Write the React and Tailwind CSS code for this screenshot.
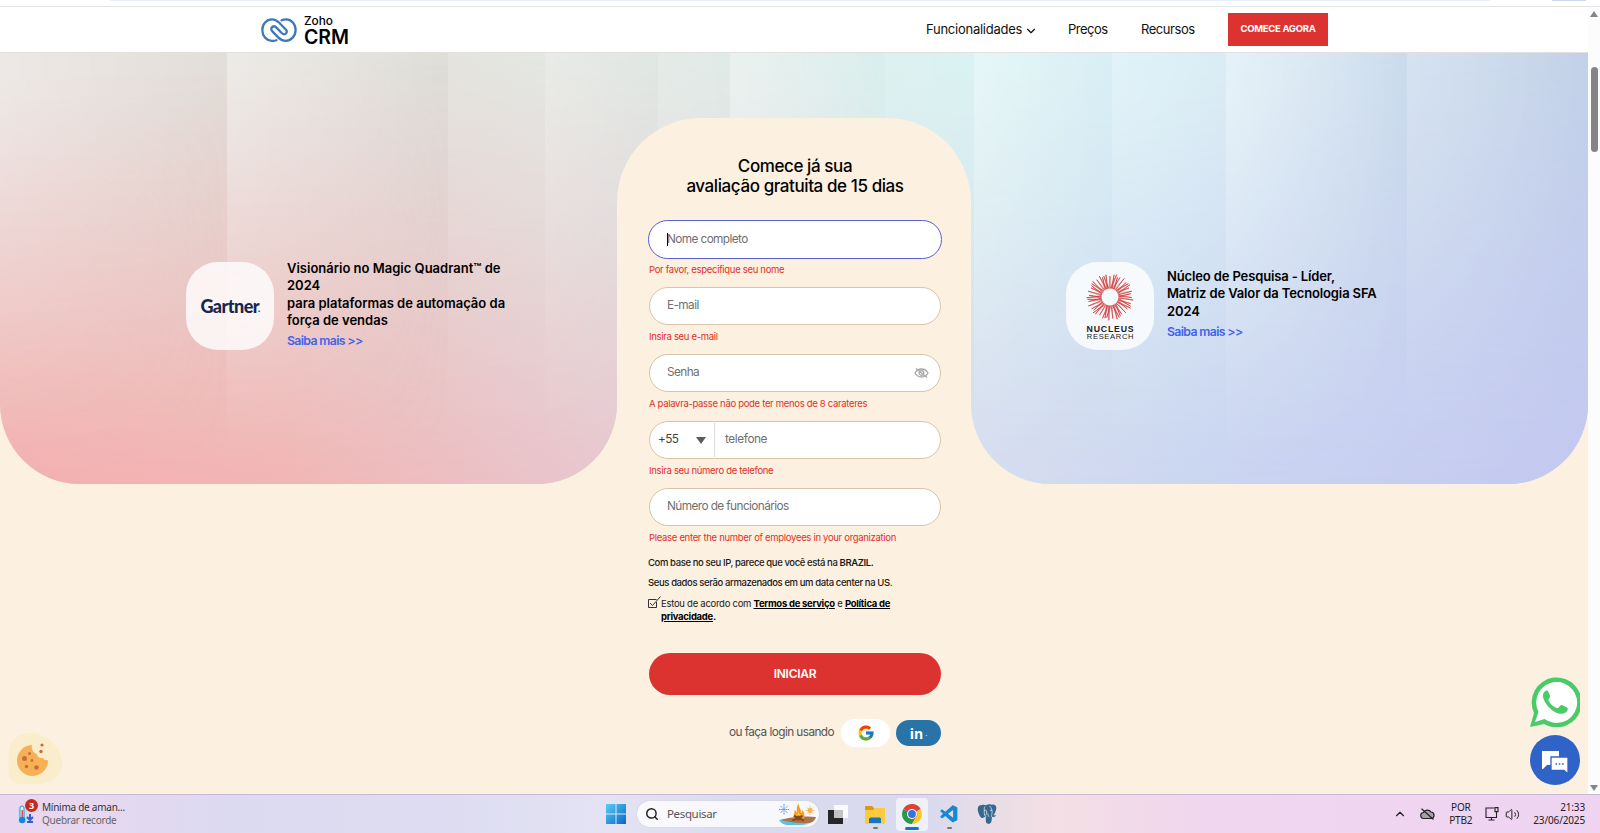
import React from "react";
import { FcGoogle } from "react-icons/fc";
import { VscVscode } from "react-icons/vsc";
import { ChevronDown, ChevronUp, Search, Volume2 } from "lucide-react";

const bandClasses = [
  "w-[227px] from-white/30 to-black/[0.005]",
  "w-[221px] from-white/35 to-black/[0.005]",
  "w-[97px] from-white/15 to-white/15",
  "w-[113px] from-white/30 to-white/5",
  "w-[72px] from-white/20 to-white/10",
  "w-[155px] from-white/40 to-white/5",
  "w-[89px] from-white/15 to-white/10",
  "w-[138px] from-white/40 to-white/10",
  "w-[114px] from-white/30 to-white/20",
  "w-[181px] from-white/45 to-white/0",
  "w-[181px] from-white/20 to-white/0",
];

function Bands() {
  return (
    <div className="grid h-[431px] w-[1588px] shrink-0 bg-[linear-gradient(to_right,#e6dfdb_0%,#e0e0da_28%,#dfe8e3_42%,#d6f3f1_60%,#d4eff6_72%,#d0e2ef_84%,#c3d3e8_100%)]">
      <div className="[grid-area:1/1] bg-[linear-gradient(to_right,#f5a8a8_0%,#f3b0b0_18%,#e8c4cd_38%,#d8dcee_60%,#cbd5f0_75%,#c3c8f0_100%)] [mask-image:linear-gradient(177deg,transparent_5%,rgba(0,0,0,.38)_40%,rgba(0,0,0,.7)_68%,black_97%)]" />
      <div className="flex [grid-area:1/1] [mask-image:linear-gradient(to_bottom,black_10%,rgba(0,0,0,.5)_50%,transparent_95%)]">
        {bandClasses.map((c) => (
          <div key={c} className={"shrink-0 bg-linear-to-r " + c} />
        ))}
      </div>
    </div>
  );
}

function ZohoMark() {
  return (
    <svg viewBox="0 0 36 24" className="h-6 w-9" fill="none" stroke="#3d78bd" strokeWidth="2.3" strokeLinecap="round" strokeLinejoin="round">
      <path d="M15.500 22.200c-2 .8-3.600.6-4.700.6C5.300 22.700 1.300 18 1.300 12S5.500 1.300 11 1.300c3 0 5 1.200 7 3.200l7 7.300c1.800 2 .2 4.500-1.800 4.500-1 0-1.700-.5-2.300-1.100l-5.400-5.600c-1.500-1.500-3-1.600-4.200-.6-1.500 1.200-1.300 3 .1 4.400l5.800 6c2.200 2.200 4.600 3.400 7.400 3.400 5.500 0 10-4.800 10-10.800S30.500 1.300 25 1.300c-1.600 0-3 .3-4.400 1" />
    </svg>
  );
}

function Field({ children, focused }) {
  return (
    <div
      className={
        "flex items-center rounded-full border bg-white text-[11.800px] text-[#6f6f6f] " +
        (focused ? "-mx-px h-[39px] border-[#5a5fd0] pl-[18px] tracking-[-0.6px]" : "h-[38px] border-[#d9c5a6] pl-[17px] tracking-[-0.58px]")
      }
    >
      {children}
    </div>
  );
}

function Err({ children, first }) {
  return (
    <p className={"text-[9.500px] leading-[15px] tracking-[-0.31px] whitespace-nowrap text-[#e0302a] " + (first ? "h-[28px] pt-[3px]" : "h-[29px] pt-[4px]")}>
      {children}
    </p>
  );
}

const rays = Array.from({ length: 48 }, (_, i) => {
  const a = (i / 48) * Math.PI * 2;
  const b = a + (((i * 7) % 5) - 2) * 0.08;
  const r = 21 + ((i * 3) % 4) * 0.8;
  return [24 + Math.cos(a) * 8.5, 24 + Math.sin(a) * 8.5, 24 + Math.cos(b) * r, 24 + Math.sin(b) * r];
});

function Nucleus() {
  return (
    <div className="flex size-[88px] shrink-0 flex-col items-center rounded-[32px] bg-white/80 pt-[11px] font-['Liberation_Sans'] text-[#222]">
      <svg viewBox="0 0 48 48" className="size-[48px] shrink-0" stroke="#cf3a38" strokeWidth="0.8">
        {rays.map((r, i) => (
          <line key={i} x1={r[0]} y1={r[1]} x2={r[2]} y2={r[3]} />
        ))}
        {rays.map((r, i) => (
          <line key={"b" + i} x1={r[0]} y1={r[1]} x2={rays[(i + 1) % 48][2]} y2={rays[(i + 1) % 48][3]} strokeWidth="0.5" />
        ))}
      </svg>
      <span className="mt-[4px] ml-px text-[8.700px] leading-[8px] font-bold tracking-[0.85px]">NUCLEUS</span>
      <span className="ml-px text-[7.600px] leading-[8px] tracking-[0.65px]">RESEARCH</span>
    </div>
  );
}

function Header() {
  return (
    <header className="flex h-[46px] w-[1588px] items-center border-b border-[#e4e0dd] bg-white pl-[261px] text-[13px] text-[#111]">
      <ZohoMark />
      <div className="ml-[7px] flex w-[70px] flex-col pt-[2px] text-black">
        <span className="text-[11.800px] leading-[12px] font-medium">Zoho</span>
        <span className="text-[19.500px] leading-[20px] font-semibold tracking-[-0.1px]">CRM</span>
      </div>
      <nav className="ml-[552px] flex items-center whitespace-nowrap">
        <span className="w-[97px] tracking-[-0.25px]">Funcionalidades</span>
        <ChevronDown className="mt-[3px] ml-px size-[14px]" strokeWidth={2} />
        <span className="ml-[30px] w-[73px] tracking-[-0.5px]">Preços</span>
        <span className="w-[87px] tracking-[-0.45px]">Recursos</span>
      </nav>
      <button className="h-[33px] w-[100px] bg-[#dc3330] text-[9.500px] font-bold tracking-[-0.3px] text-white">COMECE AGORA</button>
    </header>
  );
}

function HiddenEye() {
  return (
    <svg viewBox="0 0 15 12" className="mr-[11px] h-[12px] w-[15px]" fill="none" stroke="#a8a8a8" strokeWidth="1.300">
      <path d="M1 6c1.500-2.600 3.700-4 6.500-4S12.500 3.400 14 6c-1.500 2.600-3.700 4-6.500 4S2.500 8.600 1 6z" />
      <circle cx="7.500" cy="6" r="2.300" />
      <path d="M2 1.500l11 9" />
    </svg>
  );
}

function Form() {
  return (
    <div className="z-10 mt-[65px] w-[354px] rounded-t-[84px] bg-[#fcf0e0] pr-[30px] pl-[32px] pt-[38px] [grid-area:1/2]">
      <h1 className="text-center text-[17px] leading-[20px] font-medium tracking-[-0.41px] whitespace-nowrap text-black">
        Comece já sua
        <br />
        avaliação gratuita de 15 dias
      </h1>
      <div className="mt-[24px] flex flex-col">
        <Field focused>
          <span className="h-[13px] w-px bg-black" />
          <span className="-ml-px">Nome completo</span>
        </Field>
        <Err first>Por favor, especifique seu nome</Err>
        <Field>E-mail</Field>
        <Err>Insira seu e-mail</Err>
        <Field>
          <span className="flex-1">Senha</span>
          <HiddenEye />
        </Field>
        <Err>A palavra-passe não pode ter menos de 8 carateres</Err>
        <div className="flex h-[38px] items-center rounded-full border border-[#d9c5a6] bg-white pl-[8px] text-[11.800px] tracking-[-0.6px] text-[#6f6f6f]">
          <span className="w-[38px] text-[#444]">+55</span>
          <svg viewBox="0 0 10 7" className="h-[7px] w-[10px]" fill="#5c5c5c"><path d="M0 0h10L5 7z" /></svg>
          <span className="ml-[8px] h-[34px] w-px bg-[#ddd]" />
          <span className="ml-[10px] tracking-[-0.4px]">telefone</span>
        </div>
        <Err>Insira seu número de telefone</Err>
        <Field>Número de funcionários</Field>
        <Err>Please enter the number of employees in your organization</Err>
      </div>
      <div className="-ml-px pt-px text-[9.500px] tracking-[-0.39px] whitespace-nowrap text-[#1a1a1a]">
        <p className="leading-[14px] font-medium">Com base no seu IP, parece que você está na <b className="font-semibold">BRAZIL.</b></p>
        <p className="mt-[6px] leading-[14px] font-medium">Seus dados serão armazenados em um data center na US.</p>
        <div className="mt-[7px] flex leading-[13px] tracking-[-0.27px]">
          <svg viewBox="0 0 13 12" className="mt-[-1px] h-[12px] w-[13px]" fill="none" stroke="#333" strokeWidth="1"><path d="M8.500 3.500H.5v8h8V6M2 7l2.500 2.500L12.500.5" /></svg>
          <p>
            Estou de acordo com <b className="text-black underline">Termos de serviço</b> e <b className="text-black underline">Política de</b>
            <br />
            <b className="text-black"><span className="underline">privacidade</span>.</b>
          </p>
        </div>
      </div>
      <button className="mt-[30px] block h-[42px] w-full rounded-full bg-[#dc3330] text-[12px] font-semibold tracking-[-0.25px] text-white">INICIAR</button>
      <div className="mt-[24px] flex items-center justify-end">
        <span className="text-[11.800px] tracking-[-0.57px] whitespace-nowrap text-[#555]">ou faça login usando</span>
        <span className="ml-[7px] flex h-[28px] w-[49px] items-center justify-center rounded-full bg-white"><FcGoogle className="size-[18px]" /></span>
        <span className="ml-[6px] flex h-[26px] w-[45px] items-center justify-center rounded-full bg-[#2873a8] font-['Open_Sans'] text-[14px] font-bold text-white">in<small className="pl-[2px] text-[8px] font-normal">.</small></span>
      </div>
    </div>
  );
}

function Cookie() {
  return (
    <svg viewBox="0 0 54 52" className="absolute top-[733px] left-[8px] h-[52px] w-[54px]">
      <path d="M1 18C2 6 11 0 22 0c15 0 30 12 32 29 1 13-8 21-22 22H12C3 51 0 43 .5 34z" fill="#f9edcb" />
      <path d="M24 12a15.500 15.500 0 1 0 16 15c-2 .5-4 0-5-2-3 .5-6-1-6-4-3-1-6-4-5-9z" fill="#f6b055" />
      <g fill="#cb6b3d">
        <circle cx="16.500" cy="25.500" r="2.500" /><circle cx="28.500" cy="34.500" r="2.300" /><circle cx="18.500" cy="33.500" r="1.700" />
        <circle cx="21.500" cy="20.500" r="1.500" /><circle cx="24" cy="27.500" r="1.400" /><circle cx="34" cy="12" r="1.600" /><circle cx="33" cy="18.500" r="1.700" />
      </g>
    </svg>
  );
}

function Elephant() {
  return (
    <svg viewBox="0 0 20 20" className="ml-[17px] size-[20px]">
      <path d="M1 7C0 3 2 .8 5 1c1.500-.5 3-.3 4 .3C11-.2 13.500.2 15 .7c3-.5 4.800 1.300 4.200 4.300-.4 2.500-1.500 4.500-2.700 6.300 1 .2 2 .2 2.700 0-.8 1.500-2.400 2-4.200 1.700L14.500 17c-.3 2-1.600 3-3.200 2.800-1.800-.2-2.500-1.600-2.500-3.300L8.700 12.500c-1 .8-1.700 1.500-2.900 1.600C3.500 14.200 1.500 10 1 7z" fill="#35678f" />
      <path d="M8.700 12.500C7 11 7.300 9 7.300 7c0-1.500-.4-3 .6-4.500M14.800 13c-.6-2 .3-3 .3-5 0-2.200-.5-4-2.500-6M8.800 12.500c-.7.900-1.300 1-2.300 1M7.300 6.500c1-.7 2-.3 2.300.3.400 1.500-.2 3.200-.8 4.500M15.100 6.500c-.8-.4-1.500-.3-2 0M10.800 9.500c.3 2 .6 3 1.500 3.500" fill="none" stroke="#dce6f0" strokeWidth=".8" />
    </svg>
  );
}

function Campfire() {
  return (
    <svg viewBox="0 0 38 22" className="h-[22px] w-[38px]">
      <path d="M1 17c8-2.500 24-4.500 36-3-1 3.500-4 6-9 6.500C20 21.500 6 20 1 17z" fill="#a9744a" />
      <path d="M0 16.500c5 1.500 16 3.500 29 4.500-7 1.500-17 1.300-22.500.7C3 21 1 19 0 16.500z" fill="#5cc0e3" />
      <path d="M14.500 16c-.8-4 1.500-5 1-9 1.700 1 2 2.500 2.200 4 .2-4-.4-7 1.800-10.500.2 4 3 5.500 2.500 10 .8-1 1.500-2 1.500-4 1.800 3 2.500 6.500 1.500 9.500z" fill="#f59a1f" />
      <path d="M17 16c0-3 1.500-4 2.500-7 1 3 2.500 4 2.500 7z" fill="#ffcf4a" />
      <path d="M13.500 17.500l10-4.500M25 17.500L15 13M19.500 12.500v5" stroke="#8a4718" strokeWidth="2" />
      <path d="M5 1v11M0 6.500h10M1.500 3l7 7M8.500 3l-7 7" stroke="#5d93e5" strokeWidth="1" strokeDasharray="1.600 .6" />
      <circle cx="31" cy="7.500" r="2.400" fill="#f5b54a" />
      <path d="M31 3v9M26.500 7.500h9M28 4.500l6 6M34 4.500l-6 6" stroke="#f5b54a" strokeWidth=".7" />
    </svg>
  );
}

function Taskbar() {
  return (
    <footer className="flex h-[39px] items-center border-t border-[#c8b9d6] bg-[linear-gradient(to_right,#ecd6ef_0%,#dcdaf0_14%,#dddcf1_28%,#e3e3f4_38%,#dadbee_46%,#d9daee_58%,#eadde6_62%,#f3dfe4_66%,#f0d6ee_75%,#efd4f2_100%)] font-['Noto_Sans'] text-[10px] text-[#333]">
      <div className="flex w-[606px] items-center pl-[17px]">
        <div className="relative h-[22px] w-[22px]">
          <svg viewBox="0 0 22 22" className="size-[22px]">
            <rect x="1" y="3" width="9" height="17" rx="2" fill="#c2dff3" />
            <rect x="3" y="3" width="4" height="13" rx="2" fill="#e9f6ff" stroke="#3988c7" />
            <rect x="4.500" y="7" width="1.500" height="8" fill="#d94a55" />
            <circle cx="5.200" cy="17" r="3.200" fill="#1686d9" />
            <path d="M13 11v6m-3-3 3 3 3-3M10 19h6" stroke="#315fd0" strokeWidth="2" fill="none" />
          </svg>
          <span className="absolute -top-[4px] left-[8px] flex size-[13px] items-center justify-center rounded-full bg-[#c42b1c] text-[9px] font-bold text-white">3</span>
        </div>
        <div className="ml-[3px] leading-[13.500px] tracking-[-0.25px] whitespace-nowrap"><p>Mínima de aman...</p><p className="text-[#666]">Quebrar recorde</p></div>
      </div>
      <svg viewBox="0 0 20 20" className="size-[20px]">
        <defs><linearGradient id="win" x1="0" y1="0" x2="1" y2="1"><stop stopColor="#57cdf7" /><stop offset="1" stopColor="#0867c4" /></linearGradient></defs>
        <path fill="url(#win)" d="M0 0h9.500v9.500H0zM10.500 0H20v9.500h-9.500zM0 10.500h9.500V20H0zM10.500 10.500H20V20h-9.500z" />
      </svg>
      <div className="ml-[11px] flex h-[26px] w-[182px] items-center rounded-full bg-white/80 pl-[8px] shadow-[0_0_1px_#aaa]">
        <Search className="size-[14px] text-[#222]" strokeWidth={2.500} />
        <span className="ml-[8px] w-[112px] text-[11.500px] tracking-[-0.35px] text-[#555]">Pesquisar</span>
        <Campfire />
      </div>
      <svg viewBox="0 0 20 19" className="ml-[9px] h-[19px] w-[20px]">
        <path d="M6 0h14v13H6z" fill="#fafafa" /><path d="M0 5h15v14H0z" fill="#262626" /><path d="M6 5h9v8H6z" fill="#c2c2c4" />
      </svg>
      <div className="ml-[17px] flex flex-col items-center pt-[5px]">
        <svg viewBox="0 0 20 19" className="h-[19px] w-[20px]">
          <path d="M0 2q0-1 1-1h6l2 2v4H0z" fill="#d99a18" /><path d="M0 5h8l2-2h9q1 0 1 1v14q0 1-1 1H1q-1 0-1-1z" fill="#fccb3d" /><path d="M4 18v-4q0-1.500 1.500-1.500h9q1.500 0 1.500 1.500v4z" fill="#1873c2" />
        </svg>
        <span className="mt-[3px] h-[2px] w-[5px] rounded-full bg-[#777]" />
      </div>
      <div className="ml-[11px] flex h-[33px] w-[32px] flex-col items-center rounded-[4px] bg-white/60 pt-[6px]">
        <svg viewBox="0 0 20 20" className="size-[20px]">
          <path d="M10 10 1.340 5A10 10 0 0 1 18.660 5z" fill="#dd4234" /><path d="M10 10 1.340 5A10 10 0 0 0 10 20l4.500-7.500z" fill="#249a4b" />
          <path d="M10 10 18.660 5A10 10 0 0 1 10 20l4.300-7.500z" fill="#fbc925" /><circle cx="10" cy="10" r="5.300" fill="#dd4234" />
          <circle cx="10" cy="10" r="5" fill="#fff" /><circle cx="10" cy="10" r="3.900" fill="#2f73e4" />
        </svg>
        <span className="mt-[3px] h-[3px] w-[14px] rounded-full bg-[#1573c4]" />
      </div>
      <div className="ml-[11px] flex flex-col items-center pt-[5px]">
        <VscVscode className="size-[21px] text-[#1988cf]" />
        <span className="mt-[2px] h-[2px] w-[5px] rounded-full bg-[#777]" />
      </div>
      <Elephant />
      <div className="flex flex-1 items-center justify-end pr-[15px] text-[#222]">
        <ChevronUp className="size-[14px]" strokeWidth={2} />
        <svg viewBox="0 0 15 12" className="ml-[13px] h-[12px] w-[15px]" stroke="#222" strokeWidth="1.200">
          <path d="M4 10.500a3 3 0 0 1-.5-6A4.300 4.300 0 0 1 11 4a3.300 3.300 0 0 1 .5 6.500z" fill="#aaa0ad" />
          <path d="M1.500.8l12 10.700" />
        </svg>
        <p className="ml-[14px] text-center leading-[13.500px] tracking-[-0.2px]">POR<br />PTB2</p>
        <svg viewBox="0 0 14 14" className="ml-[13px] size-[14px]" fill="none" stroke="#222" strokeWidth="1.100"><path d="M9 1H1v9.500h10.500V7M3.500 13h6M6.500 10.500V13M10 .6h3v4h-3zM11.500 4.500V7" /></svg>
        <Volume2 className="ml-[6px] size-[15px]" strokeWidth={1.600} />
        <p className="ml-[13px] text-right leading-[13.500px] tracking-[-0.15px]">21:33<br />23/06/2025</p>
      </div>
    </footer>
  );
}

export default function App() {
  return (
    <div className="relative h-[833px] w-[1600px] overflow-hidden bg-[#fcf0e0] font-['Inter',sans-serif] antialiased">
      <div className="flex h-[7px] justify-between border-b border-[#e4e6e9] bg-white">
        <span className="ml-[110px] h-px w-[1380px] bg-[#e9eff8]" /><span className="mr-[14px] h-px w-[34px] bg-[#cdd9f0]" />
      </div>
      <div className="flex h-[787px]">
        <div className="w-[1588px]">
          <Header />
          <main className="grid h-[741px] grid-cols-[617px_354px_617px] content-start items-start overflow-hidden">
            <section className="grid h-[431px] overflow-hidden rounded-b-[80px]">
              <div className="[grid-area:1/1]"><Bands /></div>
              <div className="z-10 flex items-start pt-[203px] pl-[186px] [grid-area:1/1]">
                <div className="mt-[6px] flex size-[88px] shrink-0 items-center justify-center rounded-[32px] bg-white/80 font-['Lato'] text-[18px] font-black tracking-[-0.55px] text-[#16284f]">Gartner<span className="-ml-px pt-[5px] text-[9px]">.</span></div>
                <div className="ml-[13px] pt-[4px] text-[13px] leading-[17.300px] font-semibold whitespace-nowrap text-black">
                  <p>Visionário no Magic Quadrant™ de<br />2024<br />para plataformas de automação da<br />força de vendas</p>
                  <a className="mt-[3px] block text-[12.300px] tracking-[-0.65px] text-[#4263eb]">Saiba mais &gt;&gt;</a>
                </div>
              </div>
            </section>
            <div className="h-[160px] w-[354px] overflow-hidden [grid-area:1/2]"><div className="-ml-[617px] w-[1588px]"><Bands /></div></div>
            <Form />
            <section className="grid h-[431px] grid-cols-[617px] overflow-hidden rounded-b-[80px] [grid-area:1/3]">
              <div className="-ml-[971px] w-[1588px] [grid-area:1/1]"><Bands /></div>
              <div className="z-10 flex items-start pt-[209px] pl-[95px] [grid-area:1/1]">
                <Nucleus />
                <div className="ml-[13px] pt-[6px] text-[13px] leading-[17.300px] font-semibold tracking-[-0.13px] whitespace-nowrap text-black">
                  <p>Núcleo de Pesquisa - Líder,<br />Matriz de Valor da Tecnologia SFA<br />2024</p>
                  <a className="mt-[3px] block text-[12.300px] tracking-[-0.65px] text-[#4263eb]">Saiba mais &gt;&gt;</a>
                </div>
              </div>
            </section>
          </main>
        </div>
        <aside className="flex w-[12px] flex-col items-center bg-[#fcfcfc] pt-[4px] pb-[3px]">
          <svg viewBox="0 0 8 6" className="h-[6px] w-[8px]" fill="#858585"><path d="M4 0l4 6H0z" /></svg>
          <span className="mt-[50px] h-[85px] w-[7px] rounded-full bg-[#858585]" />
          <svg viewBox="0 0 8 6" className="mt-auto h-[6px] w-[8px]" fill="#858585"><path d="M4 6l4-6H0z" /></svg>
        </aside>
      </div>
      <Taskbar />
      <Cookie />
      <div className="absolute top-[677px] left-[1530px] flex w-[50px] flex-col gap-[8px]">
        <svg viewBox="0 0 50 50" className="size-[50px]">
          <path d="M0 50l4-14A25 25 0 1 1 14 47z" fill="#4bcb68" /><path d="M5 45l3.500-10A20.500 20.500 0 1 1 14.500 42z" fill="#fff" />
          <path d="M17 13.500c-2.500 0-4.500 3-4 6.500 1 6 8.500 14.500 15.500 16.500 4.500 1.200 9-1 9.300-4.500 0-1.500-.5-1.700-6-4-1-.3-1.300 0-3.300 2.700-.7.800-1.700.4-3-.3-3.500-1.700-5.500-4.200-7-7-.4-1 .2-1.500 1.300-3 .5-.7.500-1 .2-1.800-2-4.500-1.800-5.100-3-5.100z" fill="#4bcb68" />
        </svg>
        <div className="flex size-[50px] items-center justify-center rounded-full bg-[#2f63c8]">
          <svg viewBox="0 0 28 24" className="mt-[4px] h-[24px] w-[28px]"><path d="M1 1h17v14H6l-4 4H1z" fill="#fff" /><path d="M10 7h17v17l-4-3.500H10z" fill="#fff" stroke="#2f63c8" strokeWidth="1.300" /><path d="M14.500 14h1.600m1.700 0h1.600m1.700 0h1.600" stroke="#2f63c8" strokeWidth="1.500" /></svg>
        </div>
      </div>
    </div>
  );
}
